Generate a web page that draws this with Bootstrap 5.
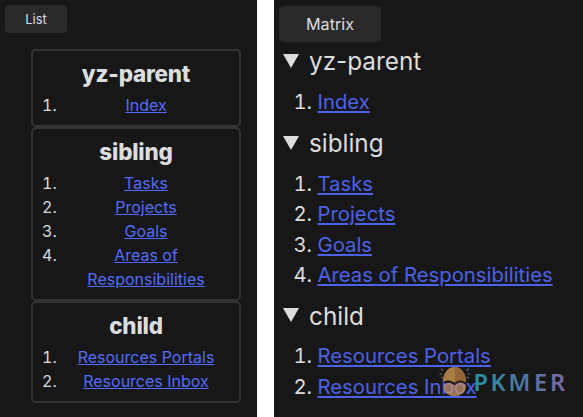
<!DOCTYPE html>
<html lang="en" data-bs-theme="dark">
<head>
<meta charset="utf-8">
<title>List and Matrix</title>
<meta name="viewport" content="width=device-width, initial-scale=1">
<link href="https://cdn.jsdelivr.net/npm/bootstrap@5.3.0/dist/css/bootstrap.min.css" rel="stylesheet">
<style>
body{background:#fff;color:#dcddde;font-family:Inter,"Noto Sans",sans-serif;font-size:16px;line-height:24px;height:417px}
.pane{background:#171717;height:417px}
.pane-list{width:257px;padding:5px}
.pane-matrix{width:309px;padding:6px 5px;font-size:20.3px;line-height:30.4px}
.btn-view{--bs-btn-bg:#2a2a2a;--bs-btn-color:#dcddde;--bs-btn-border-width:0;--bs-btn-padding-x:0;--bs-btn-padding-y:0;--bs-btn-border-radius:4px;width:62px;height:28px;font-size:13px;line-height:28px}
.pane-matrix .btn-view{width:102px;height:36px;font-size:16.2px;line-height:37px;--bs-btn-border-radius:5px}
.groups{margin:16px 11px 0 26px}
.group-box{border:2px solid #333;border-radius:5px;padding:0 6px 7.4px}
.group-box h2{font-size:22.4px;font-weight:800;letter-spacing:-.2px;line-height:28px;margin:0;padding:9px 0 5.6px;color:#dcddde}
.group-box:first-child h2{padding-bottom:5.3px}
.group-box ol{padding-left:22px;padding-right:2px}
.group-box a{color:#536dfa}
.pane-matrix a{color:#4c62e8}
.sect-title{font-size:24.3px;line-height:38px;height:38px;margin-bottom:6.5px;gap:10px;padding-left:4px}
.pane-matrix .btn-view + .sect-title{margin-top:.4px;margin-bottom:7px}
.sect-title + ol{padding-left:38.5px;margin-bottom:6.4px}
.sect-title svg{position:relative;top:-.5px}
.watermark{position:absolute;left:438px;top:364px}
</style>
<script src="https://cdn.jsdelivr.net/npm/bootstrap@5.3.0/dist/js/bootstrap.bundle.min.js"></script>
</head>
<body class="d-flex justify-content-between overflow-hidden position-relative">
<section class="pane pane-list">
  <button class="btn btn-view d-block">List</button>
  <div class="groups text-center">
    <div class="group-box"><h2>yz-parent</h2>
      <ol class="mb-0"><li><a href="#">Index</a></li></ol></div>
    <div class="group-box"><h2>sibling</h2>
      <ol class="mb-0"><li><a href="#">Tasks</a></li><li><a href="#">Projects</a></li><li><a href="#">Goals</a></li><li><a href="#">Areas of Responsibilities</a></li></ol></div>
    <div class="group-box"><h2>child</h2>
      <ol class="mb-0"><li><a href="#">Resources Portals</a></li><li><a href="#">Resources Inbox</a></li></ol></div>
  </div>
</section>
<section class="pane pane-matrix text-nowrap">
  <button class="btn btn-view d-block">Matrix</button>
  <div class="sect-title d-flex align-items-center"><svg width="16" height="14"><path d="M0 0H16L8 14Z" fill="#dcddde"/></svg><span>yz-parent</span></div>
  <ol><li><a href="#">Index</a></li></ol>
  <div class="sect-title d-flex align-items-center"><svg width="16" height="14"><path d="M0 0H16L8 14Z" fill="#dcddde"/></svg><span>sibling</span></div>
  <ol><li><a href="#">Tasks</a></li><li><a href="#">Projects</a></li><li><a href="#">Goals</a></li><li><a href="#">Areas of Responsibilities</a></li></ol>
  <div class="sect-title d-flex align-items-center"><svg width="16" height="14"><path d="M0 0H16L8 14Z" fill="#dcddde"/></svg><span>child</span></div>
  <ol><li><a href="#">Resources Portals</a></li><li><a href="#">Resources Inbox</a></li></ol>
</section>
<svg class="watermark" width="132" height="34" viewBox="438 364 132 34">
  <defs><linearGradient id="wm" gradientUnits="userSpaceOnUse" x1="474" y1="0" x2="566" y2="0"><stop offset="0" stop-color="#2591a0"/><stop offset=".5" stop-color="#4a78a6"/><stop offset="1" stop-color="#7d68a4"/></linearGradient></defs>
  <path d="M443 382C443 373 448 367 454.5 367S466 373 466 382L463 383Q460 379 455 383Q449 379 443 382Z" fill="#a97c45"/>
  <path d="M454.5 367C461 367 466 373 466 382L463 383Q460 379 455 383Z" fill="#926638"/>
  <path d="M443.500 385Q448 381 453 384L455 385L458 383Q462 381 466 385C466 392 461 396 454.500 396S443 392 443.500 385Z" fill="#c99475" fill-opacity=".72"/>
  <path d="M444 382.500Q448 379.500 452 382.500L454.500 384L457.500 382Q461 380 465 383" fill="none" stroke="#251c1b" stroke-width="1.600"/>
  <path d="M444.500 387Q447 395 454.500 395.500Q462 395 465 387" fill="none" stroke="#b1834b" stroke-width="1.200"/>
  <path d="M441 369l2.500 1.500M439.500 374h2.500M441 378l2-.8M469 369l-2.500 1.500M470 374h-2.500M469 378l-2-.8" stroke="#77898e" stroke-width="1.100" opacity=".8"/>
  <text y="391" x="473.500 490.500 508.500 534 550" font-family="Noto Sans" font-weight="600" font-size="23.500" fill="url(#wm)">PKMER</text>
</svg>
</body>
</html>
